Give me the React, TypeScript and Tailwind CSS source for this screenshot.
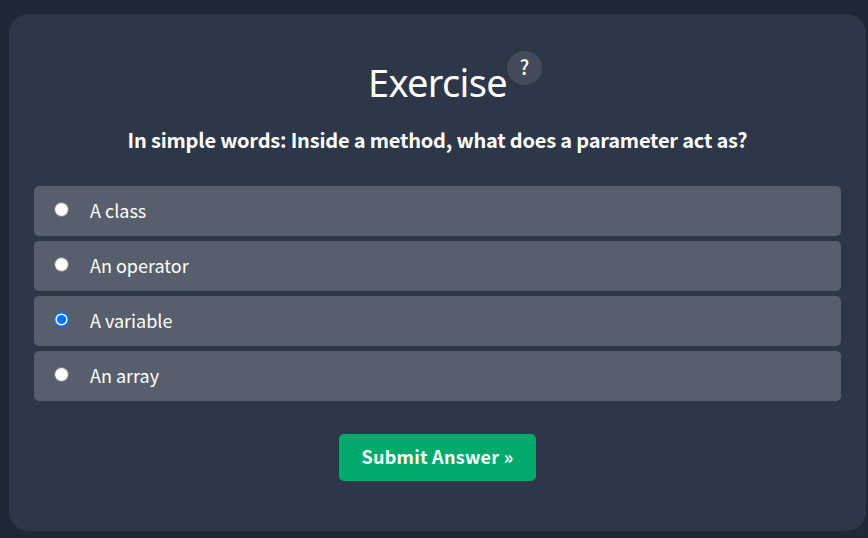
const options = ['A class', 'An operator', 'A variable', 'An array'];

function Radio({ checked }: { checked: boolean }) {
  return (
    <svg className="-mt-[3px] size-[15px] shrink-0" viewBox="0 0 15 15">
      {checked ? (
        <>
          <circle cx="7.5" cy="7.5" r="7.4" fill="#0075ff" />
          <circle cx="7.5" cy="7.5" r="6.1" fill="#fff" />
          <circle cx="7.5" cy="7.5" r="4.6" fill="#0075ff" />
        </>
      ) : (
        <circle cx="7.5" cy="7.5" r="6.9" fill="#fff" stroke="#767676" strokeWidth="1" />
      )}
    </svg>
  );
}

export default function App() {
  return (
    <div className="h-[538px] w-[868px] bg-[#1d2a35] pt-[14px] pl-[9px] font-['Noto_Sans_CJK_SC',sans-serif] text-white">
      <main className="flex h-[517px] w-[857px] flex-col items-center rounded-[20px] bg-[#2e3748] px-[25px] pt-[37px]">
        <div className="flex h-[67px] items-start pl-[35px]">
          <h1 className="mt-[3px] w-[139px] font-['Noto_Sans',sans-serif] text-[38px] leading-[57px] tracking-[-0.7px] whitespace-nowrap">
            Exercise
          </h1>
          <span className="flex h-[34px] w-[35px] items-center justify-center rounded-full bg-[#434b59] pb-[2px] text-[20px] leading-none font-medium">
            ?
          </span>
        </div>
        <p className="h-[68px] text-[20px] leading-[44px] font-bold tracking-[-0.2px] whitespace-nowrap">
          In simple words: Inside a method, what does a parameter act as?
        </p>
        <div className="flex w-full flex-col gap-[5px]">
          {options.map((option) => (
            <label key={option} className="flex h-[50px] items-center rounded-[5px] bg-[#585f6c] pl-[20px]">
              <Radio checked={option === 'A variable'} />
              <span className="ml-[21px] pb-[2px] text-[18px] leading-[48px]">{option}</span>
            </label>
          ))}
        </div>
        <button className="mt-[33px] h-[47px] w-[197px] rounded-[5px] bg-[#04aa6d] pb-[2px] text-[18px] leading-[45px] font-bold tracking-[0.27px] whitespace-nowrap">
          Submit Answer »
        </button>
      </main>
    </div>
  );
}
